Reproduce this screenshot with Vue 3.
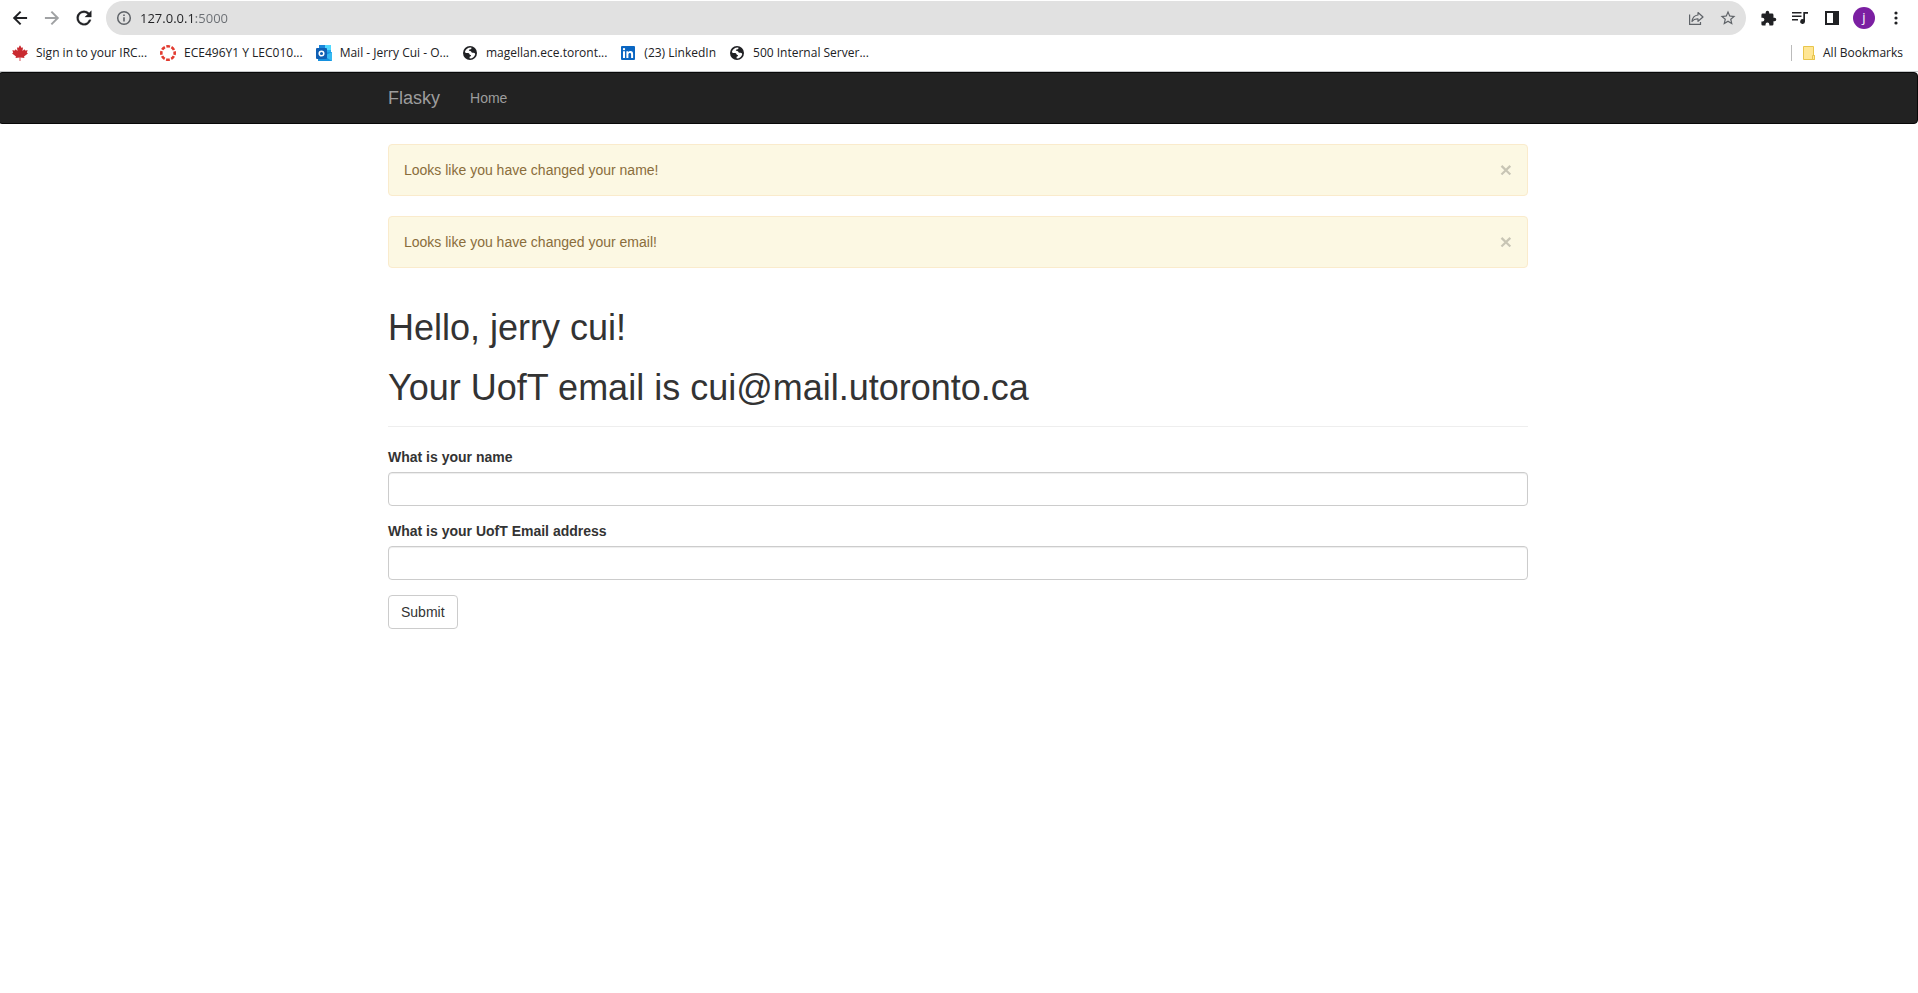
<script setup>
import { ref } from 'vue'

const address = ref('127.0.0.1:5000')
const name = ref('')
const email = ref('')

const bookmarks = [
  { icon: 'maple', label: 'Sign in to your IRC...' },
  { icon: 'canvas', label: 'ECE496Y1 Y LEC010...' },
  { icon: 'outlook', label: 'Mail - Jerry Cui - O...' },
  { icon: 'globe', label: 'magellan.ece.toront...' },
  { icon: 'linkedin', label: '(23) LinkedIn' },
  { icon: 'globe', label: '500 Internal Server...' },
]

const alerts = ref([
  'Looks like you have changed your name!',
  'Looks like you have changed your email!',
])

function dismiss(index) {
  alerts.value.splice(index, 1)
}
</script>

<template>
  <div class="window">
    <header class="browser">
      <div class="toolbar">
        <button class="tool" type="button" aria-label="Back">
          <svg width="20" height="20" viewBox="0 0 24 24"><path d="M20.5 10.8v2.4H8l5.600 5.600-1.700 1.700L3.400 12l8.500-8.500 1.700 1.700L8 10.800z" fill="#202124" /></svg>
        </button>
        <button class="tool" type="button" aria-label="Forward">
          <svg width="20" height="20" viewBox="0 0 24 24"><path d="M3.500 10.800v2.400H16l-5.600 5.600 1.700 1.700 8.500-8.500-8.500-8.500-1.700 1.700 5.600 5.600z" fill="#a0a2a4" /></svg>
        </button>
        <button class="tool" type="button" aria-label="Reload">
          <svg width="22" height="22" viewBox="0 0 24 24"><path d="M17.650 6.350A7.950 7.950 0 0 0 12 4a8 8 0 1 0 7.730 10h-2.300A5.800 5.800 0 1 1 12 6.200c1.600 0 3.050.700 4.100 1.700L13 11h7V4z" fill="#202124" stroke="#202124" stroke-width=".3" /></svg>
        </button>
        <div class="omnibox">
          <button class="tool" type="button" aria-label="Site information">
            <svg width="16" height="16" viewBox="0 0 16 16"><circle cx="8" cy="8" r="6.300" fill="none" stroke="#5f6368" stroke-width="1.500" /><path d="M7.200 7.200h1.600V11.500H7.200zM7.200 4.500h1.600v1.600H7.200z" fill="#5f6368" /></svg>
          </button>
          <input v-model="address" class="address" type="text" aria-label="Address" spellcheck="false" />
          <button class="tool" type="button" aria-label="Share">
            <svg width="16" height="16" viewBox="0 0 16 16" fill="none" stroke="#5f6368" stroke-width="1.200"><path d="M1.600 4.500V14.400H12.500V12" /><path d="M10 2.500l5 4.500-5 4.300V8.900C7.200 8.700 5.400 9.600 4 11.500 4.400 8 6.300 5.400 10 5z" stroke-linejoin="round" /></svg>
          </button>
          <button class="tool" type="button" aria-label="Bookmark this page">
            <svg width="18" height="18" viewBox="0 0 24 24"><path d="M22 9.240l-7.190-.620L12 2 9.190 8.630 2 9.240l5.460 4.730L5.820 21 12 17.270 18.180 21l-1.630-7.030zM12 15.400l-3.760 2.270 1-4.280-3.320-2.880 4.380-.380L12 6.100l1.710 4.040 4.380.380-3.320 2.880 1 4.280z" fill="#5f6368" /></svg>
          </button>
        </div>
        <div class="actions">
          <button class="tool" type="button" aria-label="Extensions">
            <svg width="17" height="17" viewBox="0 0 24 24"><path d="M20.500 11H19V7a2 2 0 0 0-2-2h-4V3.500a2.500 2.500 0 0 0-5 0V5H4a2 2 0 0 0-2 2v3.800h1.500a2.700 2.700 0 0 1 0 5.400H2V20a2 2 0 0 0 2 2h3.800v-1.500a2.700 2.700 0 0 1 5.400 0V22H17a2 2 0 0 0 2-2v-4h1.500a2.500 2.500 0 0 0 0-5z" fill="#202124" /></svg>
          </button>
          <button class="tool" type="button" aria-label="Media controls">
            <svg width="16" height="16" viewBox="0 0 16 16" fill="#202124"><path d="M0 2h9.500v1.600H0zM0 5.500h9.500v1.600H0zM0 9h6v1.600H0zM11.300 2H16v1.800h-3V11.500a2.400 2.400 0 1 1-1.700-2.300z" /></svg>
          </button>
          <button class="tool" type="button" aria-label="Side panel">
            <svg width="14" height="14" viewBox="0 0 14 14"><path d="M0 0h14v14H0zM2 2v10h6V2z" fill="#202124" fill-rule="evenodd" /></svg>
          </button>
          <button class="tool" type="button" aria-label="Profile">
            <span class="avatar">j</span>
          </button>
          <button class="tool" type="button" aria-label="Menu">
            <svg width="4" height="14" viewBox="0 0 4 14" fill="#202124"><circle cx="2" cy="2" r="1.600" /><circle cx="2" cy="7" r="1.600" /><circle cx="2" cy="12" r="1.600" /></svg>
          </button>
        </div>
      </div>

      <nav class="bookmarks" aria-label="Bookmarks">
        <a v-for="(item, i) in bookmarks" :key="i" class="bookmark" href="#">
          <svg v-if="item.icon === 'maple'" width="16" height="16" viewBox="0 0 16 16"><path d="M8 .300L9.700 3l1.300-.700-.500 3.700 2-1.800.6 1.300 2.600-.3-.9 2.300 1.100.9-3.900 3.200.5 1.400L8.400 12.500V16h-.8v-3.500L3.500 13l.5-1.400L.1 8.400l1.100-.9L.3 5.200l2.600.3.6-1.300 2 1.800L5 2.300l1.300.7z" fill="#c92a30" /></svg>
          <svg v-else-if="item.icon === 'canvas'" width="16" height="16" viewBox="0 0 16 16"><circle cx="8" cy="8" r="6.700" fill="none" stroke="#e23b30" stroke-width="2.600" stroke-dasharray="3.760 1.500" stroke-dashoffset="1.880" /></svg>
          <svg v-else-if="item.icon === 'outlook'" width="16" height="16" viewBox="0 0 16 16"><path d="M3 0h12v11H3z" fill="#28a8ea" /><path d="M9 0h6v5H9z" fill="#50d9ff" /><path d="M3 0h6v4H3z" fill="#1a86d9" /><path d="M2 8l14-1v9H2z" fill="#1490df" /><path d="M16 7v9L8 11z" fill="#35b8f1" /><rect y="3" width="11" height="11" rx="1" fill="#0f5fb4" /><circle cx="5.500" cy="8.500" r="2.300" fill="none" stroke="#fff" stroke-width="1.500" /></svg>
          <svg v-else-if="item.icon === 'linkedin'" width="16" height="16" viewBox="0 0 16 16"><rect x="1" y="1" width="14" height="14" rx="1" fill="#0a66c2" /><path d="M3 6.300h2V13H3zM6.400 6.300h1.900v1C8.900 6.400 9.700 6.100 10.500 6.100c1.900 0 2.600 1.200 2.600 3.100V13h-2V9.600c0-1-.3-1.700-1.200-1.700-1 0-1.500.7-1.500 1.700V13h-2z" fill="#fff" /><circle cx="4" cy="4.100" r="1.200" fill="#fff" /></svg>
          <svg v-else width="16" height="16" viewBox="0 0 16 16"><circle cx="8" cy="8" r="7" fill="#202124" /><path d="M9.300 2.500C6 2.300 3.800 4 2.900 6.700c.5 1.300 1.600 1.500 3.100 1.400 1.700 0 1 1.700 2.300 1.800 1.400.1.800 1.500-.2 1.700-.9.2-.5 1.200-.3 1.900 3 0 4.700-1.900 5.400-4.300-.2-1.500-1.500-1.300-2.700-1.400-1.500-.1-.9-1.600-2.400-1.700-1.500-.1-1.700-1.500-.3-1.600 1.300-.1 1.900-.6 1.500-2z" fill="#fff" /></svg>
          <span>{{ item.label }}</span>
        </a>
        <a class="bookmark all" href="#">
          <svg width="12" height="14" viewBox="0 0 12 14"><path d="M.5.500h10v9h1v4H.5z" fill="#ffe694" stroke="#e8c54c" /><path d="M9.500 13.500v-4h2v4z" fill="#ffe694" stroke="#e8c54c" /></svg>
          <span>All Bookmarks</span>
        </a>
      </nav>
    </header>

    <div class="page">
      <nav class="navbar">
        <div class="container nav-inner">
          <a class="brand" href="#">Flasky</a>
          <a class="nav-link" href="#">Home</a>
        </div>
      </nav>

      <main class="container">
        <div v-for="(message, i) in alerts" :key="message" class="alert" role="alert">
          <span>{{ message }}</span>
          <button class="close" type="button" aria-label="Close" @click="dismiss(i)">×</button>
        </div>

        <div class="page-header">
          <h1>Hello, jerry cui!</h1>
          <h1>Your UofT email is cui@mail.utoronto.ca</h1>
        </div>

        <form @submit.prevent>
          <div class="form-group">
            <label for="name">What is your name</label>
            <input id="name" v-model="name" class="control" type="text" />
          </div>
          <div class="form-group">
            <label for="email">What is your UofT Email address</label>
            <input id="email" v-model="email" class="control" type="text" />
          </div>
          <button class="submit" type="submit">Submit</button>
        </form>
      </main>
    </div>
  </div>
</template>

<style>
body {
  margin: 0;
  background: #fff;
}
</style>

<style scoped>
.window,
.window * {
  box-sizing: border-box;
}

.window {
  overflow-x: hidden;
  font: 14px/20px "Liberation Sans", Arial, sans-serif;
  color: #333;
}

button,
input {
  font: inherit;
}

a {
  text-decoration: none;
}

.browser {
  font-family: "Open Sans", "Noto Sans", sans-serif;
  color: #202124;
  border-bottom: 1px solid #c6c8ca;
}

.toolbar {
  display: flex;
  align-items: center;
  height: 36px;
  padding: 0 6px 0 4px;
}

.tool {
  display: flex;
  flex: none;
  align-items: center;
  justify-content: center;
  width: 32px;
  height: 32px;
  padding: 0;
  border: 0;
  background: none;
}

.omnibox {
  display: flex;
  flex: 1;
  align-items: center;
  height: 34px;
  margin: 0 6px;
  padding: 0 2px;
  border-radius: 17px;
  background: #e1e1e1;
}

.address {
  flex: 1;
  min-width: 0;
  height: 24px;
  padding: 0;
  border: 0;
  outline: 0;
  font-size: 13px;
  color: transparent;
  background: linear-gradient(to right, #202124 56px, #6a6e73 56px);
  background-clip: text;
}

.actions {
  display: flex;
}

.avatar {
  width: 22px;
  height: 22px;
  border-radius: 50%;
  background: #7b1fa2;
  color: #fff;
  font-size: 13px;
  line-height: 20px;
  text-align: center;
}

.bookmarks {
  display: flex;
  align-items: center;
  gap: 13px;
  height: 35px;
  padding: 0 15px 2px 12px;
  font-size: 12px;
}

.bookmark {
  display: flex;
  align-items: center;
  gap: 8px;
  color: #202124;
  line-height: 16px;
  white-space: nowrap;
}

.all {
  margin-left: auto;
  padding-left: 11px;
  border-left: 1px solid #bbb;
}

/* The page surface runs slightly under the window's left edge. */
.page {
  margin-left: -2px;
}

.navbar {
  margin-bottom: 20px;
  border: 1px solid #080808;
  border-radius: 4px;
  background: #222;
}

.container {
  max-width: 1170px;
  margin-right: auto;
  margin-left: auto;
  padding: 0 15px;
}

.nav-inner {
  display: flex;
  gap: 30px;
}

.brand,
.nav-link {
  padding: 15px 0;
  color: #9d9d9d;
}

.brand {
  font-size: 18px;
}

.alert {
  display: flex;
  justify-content: space-between;
  margin-bottom: 20px;
  padding: 15px;
  border: 1px solid #faebcc;
  border-radius: 4px;
  background: #fcf8e3;
  color: #8a6d3b;
}

.close {
  padding: 0;
  border: 0;
  background: none;
  color: #000;
  font-size: 21px;
  font-weight: bold;
  line-height: 20px;
  opacity: 0.2;
  text-shadow: 0 1px 0 #fff;
}

.page-header {
  margin: 40px 0 20px;
  padding-bottom: 9px;
  border-bottom: 1px solid #eee;
}

h1 {
  margin: 20px 0 10px;
  font-size: 36px;
  font-weight: 500;
  line-height: 1.1;
}

.form-group {
  margin-bottom: 15px;
}

label {
  display: block;
  margin-bottom: 5px;
  font-weight: bold;
}

.control {
  display: block;
  width: 100%;
  height: 34px;
  padding: 6px 12px;
  border: 1px solid #ccc;
  border-radius: 4px;
  background: #fff;
  box-shadow: inset 0 1px 1px rgba(0, 0, 0, 0.075);
  color: #555;
}

.submit {
  padding: 6px 12px;
  border: 1px solid #ccc;
  border-radius: 4px;
  background: #fff;
  color: #333;
}
</style>
